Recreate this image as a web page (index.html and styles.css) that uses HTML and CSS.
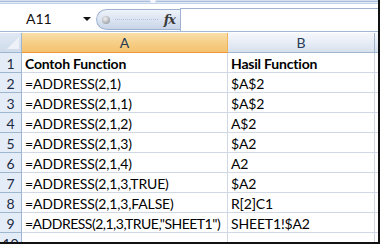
FILE: index.html
```html
<!DOCTYPE html>
<html>
<head>
<meta charset="utf-8">
<link rel="stylesheet" href="styles.css">
</head>
<body>
<div class="window">
  <div class="ribbon-edge"><span class="notch"></span></div>
  <div class="formula-bar">
    <div class="namebox"><span class="name">A11</span><span class="arrow"></span></div>
    <div class="fx-pill"><span class="knob"></span><span class="dots"></span><span class="fx">fx</span></div>
    <div class="formula-input"></div>
  </div>
  <div class="sheet">
    <div class="corner"><span class="tri"></span></div>
    <div class="colhead sel">A</div>
    <div class="colhead">B</div>
    <div class="colhead rest"></div>

    <div class="rowhead">1</div><div class="cell bold">Contoh Function</div><div class="cell bold">Hasil Function</div><div class="cell rest"></div>
    <div class="rowhead">2</div><div class="cell">=ADDRESS(2,1)</div><div class="cell">$A$2</div><div class="cell rest"></div>
    <div class="rowhead">3</div><div class="cell">=ADDRESS(2,1,1)</div><div class="cell">$A$2</div><div class="cell rest"></div>
    <div class="rowhead">4</div><div class="cell">=ADDRESS(2,1,2)</div><div class="cell">A$2</div><div class="cell rest"></div>
    <div class="rowhead">5</div><div class="cell">=ADDRESS(2,1,3)</div><div class="cell">$A2</div><div class="cell rest"></div>
    <div class="rowhead">6</div><div class="cell">=ADDRESS(2,1,4)</div><div class="cell">A2</div><div class="cell rest"></div>
    <div class="rowhead">7</div><div class="cell">=ADDRESS(2,1,3,TRUE)</div><div class="cell">$A2</div><div class="cell rest"></div>
    <div class="rowhead">8</div><div class="cell">=ADDRESS(2,1,3,FALSE)</div><div class="cell">R[2]C1</div><div class="cell rest"></div>
    <div class="rowhead">9</div><div class="cell tight">=ADDRESS(2,1,3,TRUE,"SHEET1")</div><div class="cell">SHEET1!$A2</div><div class="cell rest"></div>
    <div class="rowhead last">10</div><div class="cell"></div><div class="cell"></div><div class="cell rest"></div>
  </div>
</div>
</body>
</html>
```
FILE: styles.css
```css
* { box-sizing: border-box; }
html, body { margin: 0; padding: 0; }
body { width: 380px; height: 244px; overflow: hidden; background: #fff; font-family: "Lato", "Liberation Sans", sans-serif; }

.window {
  width: 380px; height: 244px;
  border-right: 2px solid #111;
  border-bottom: 2px solid #111;
  overflow: hidden;
  display: flex; flex-direction: column;
}

.ribbon-edge {
  height: 4px; flex: none; position: relative;
  background: linear-gradient(#d3dff0 0, #d3dff0 1px, #a9bedb 1px, #a9bedb 2px, #e3ebf6 2px, #e3ebf6 3px, #c3d3e8 3px);
}
.ribbon-edge .notch {
  position: absolute; left: 150px; top: 0; width: 6px; height: 3px;
  background: #f4f7fb; border-radius: 0 0 3px 3px;
}

.formula-bar {
  height: 28px; flex: none;
  display: flex; align-items: flex-start;
  border-bottom: 1px solid #a3b8d6;
}
.namebox {
  width: 96px; height: 27px; display: flex; align-items: center;
  padding-left: 26px; padding-top: 2px;
}
.namebox .name { font-family: "Lato", sans-serif; font-size: 14px; color: #111; width: 57px; }
.namebox .arrow {
  width: 0; height: 0; border-left: 4px solid transparent; border-right: 4px solid transparent;
  border-top: 4px solid #111; margin-top: 1px;
}

.fx-pill {
  width: 84px; height: 21px; margin-top: 5px;
  border: 1px solid #9fb3d1; border-right: none;
  border-radius: 11px 0 0 11px;
  background: linear-gradient(#eef3fa, #dbe4f1 50%, #c8d5e8);
  display: flex; align-items: center; padding-left: 5px;
}
.fx-pill .knob {
  width: 8px; height: 8px; border-radius: 50%;
  background: radial-gradient(circle at 40% 35%, #f2f2f2, #9a9ea6 80%);
  flex: none;
}
.fx-pill .dots {
  flex: 1; height: 1px; margin: 0 6px 0 5px;
  border-top: 1px dotted #b4c2d8;
}
.fx-pill .fx {
  font-family: "DejaVu Serif", "Liberation Serif", serif; font-style: italic; font-weight: bold;
  font-size: 13px; color: #3b3b3b; margin-right: 5px; letter-spacing: -1px;
}

.formula-input {
  flex: 1; height: 23px; margin-top: 4px;
  border-top: 1px solid #9fb3d1; border-left: 1px solid #9fb3d1;
  background: #fff;
}

.sheet {
  margin-top: 1px;
  display: grid;
  grid-template-columns: 22px 206px 147px 1fr;
  grid-auto-rows: 20px;
}

.corner {
  position: relative;
  background: linear-gradient(#dfe8f4, #cfdbeb);
  border-right: 1px solid #9eb6ce; border-bottom: 1px solid #9eb6ce;
}
.corner .tri {
  position: absolute; right: 2px; bottom: 3px; width: 0; height: 0;
  border-left: 12px solid transparent;
  border-bottom: 12px solid #eef2f8;
}

.colhead {
  background: linear-gradient(#f5f8fc, #e6ecf5 55%, #d8e0ed);
  border-right: 1px solid #9eb6ce; border-bottom: 1px solid #9eb6ce;
  text-align: center; font-size: 14px; line-height: 20px; color: #273a55;
}
.colhead.sel {
  background: linear-gradient(#f9dfaa, #f6cf88 50%, #f3c26f);
  border-bottom: 1px solid #f29536; border-right: 1px solid #f2b45a;
}
.colhead.rest { border-right: none; }

.rowhead {
  background: #e4ecf7;
  border-right: 1px solid #9eb6ce; border-bottom: 1px solid #9eb6ce;
  text-align: center; font-size: 14px; line-height: 21px; color: #1d2b44;
}
.rowhead.last { line-height: 22px; }

.cell {
  border-right: 1px solid #d0d7e5; border-bottom: 1px solid #d0d7e5;
  padding-left: 3px; font-size: 14px; line-height: 21px; color: #000;
  letter-spacing: -0.15px;
  white-space: nowrap; overflow: hidden;
}
.cell.bold { font-weight: bold; letter-spacing: -0.2px; }
.cell.tight { letter-spacing: -0.5px; }
.cell.rest { border-right: none; }
```
